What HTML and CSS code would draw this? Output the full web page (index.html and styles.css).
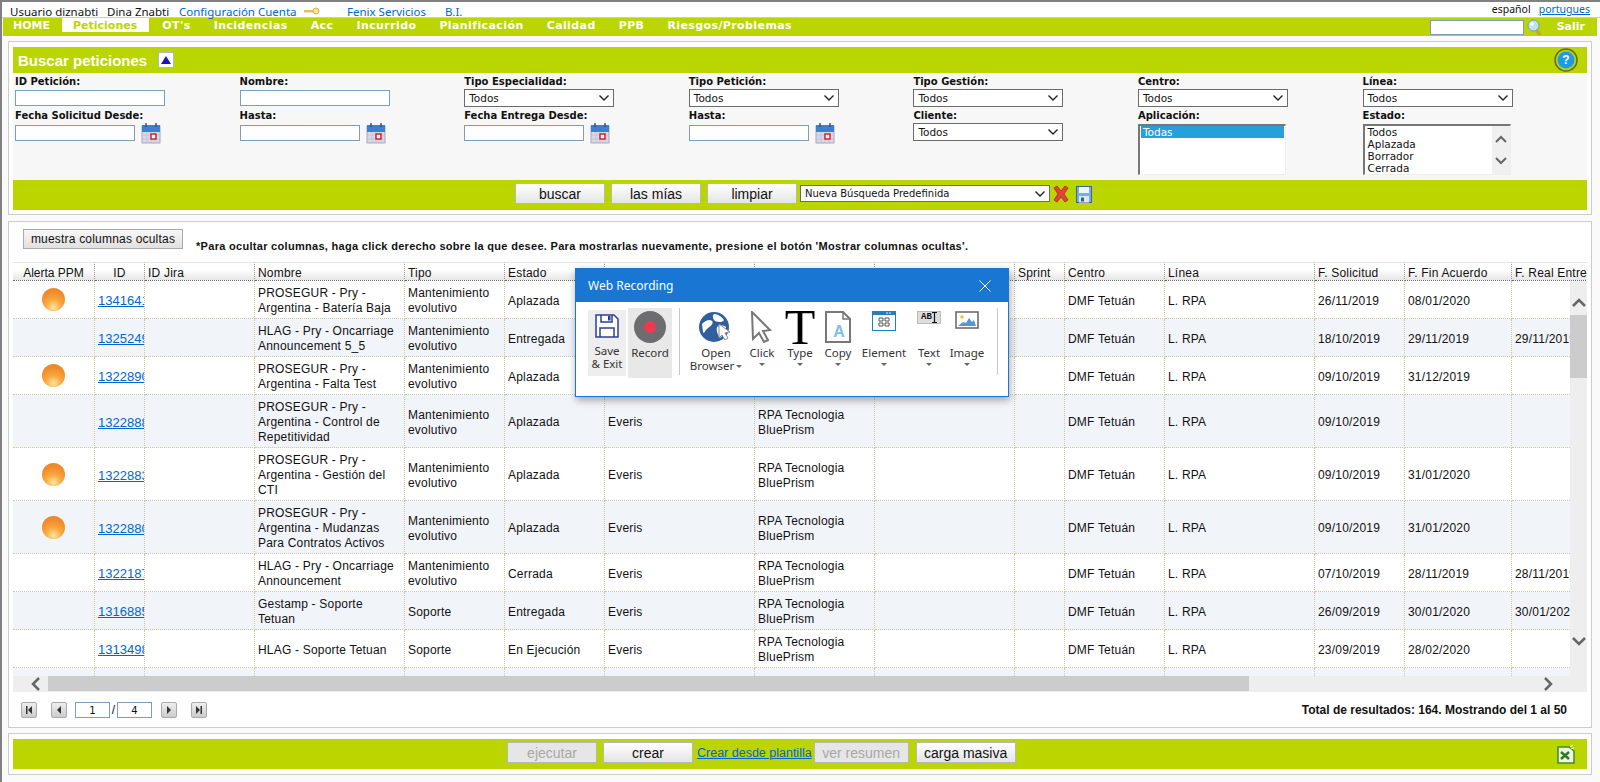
FILE: index.html
```html
<!DOCTYPE html>
<html>
<head>
    <title>Buscar peticiones</title>
    <link rel="stylesheet" href="styles.css">
</head>
<body>
<div class="page">
    <div class="topbar">
        <span class="user">Usuario diznabti</span>
        <span class="user-name">Dina Znabti</span>
        <a class="top-link cuenta">Configuración Cuenta</a>
        <svg class="key" width="16" height="8" viewBox="0 0 16 8"><rect x="0" y="3" width="10" height="2.4" fill="#e6bc60"/><circle cx="12" cy="4" r="3" fill="#f8e2a0" stroke="#dcae50"/></svg>
        <a class="top-link fenix">Fenix Servicios</a>
        <a class="top-link bi">B.I.</a>
        <span class="langs"><span>español</span><a class="lang-link">portugues</a></span>
    </div>

    <div class="menu">
        <a class="menu-item">HOME</a>
        <a class="menu-item active">Peticiones</a>
        <a class="menu-item">OT's</a>
        <a class="menu-item">Incidencias</a>
        <a class="menu-item">Acc</a>
        <a class="menu-item">Incurrido</a>
        <a class="menu-item">Planificación</a>
        <a class="menu-item">Calidad</a>
        <a class="menu-item">PPB</a>
        <a class="menu-item">Riesgos/Problemas</a>
        <div class="menu-right">
            <input class="menu-search" type="text">
            <svg width="16" height="17" viewBox="0 0 16 17"><path d="M9 10l4 6" stroke="#c9a23a" stroke-width="3"/><circle cx="6.500" cy="6.500" r="5.500" fill="#bfe3ee" stroke="#6f9fb0"/><circle cx="5" cy="5" r="2" fill="#eefafd"/></svg>
            <a class="menu-item salir">Salir</a>
        </div>
    </div>

    <div class="panel search-panel">
        <div class="green-head">
            <span class="head-title">Buscar peticiones</span>
            <span class="toggle"><svg width="10" height="8" viewBox="0 0 10 8"><path d="M5 0l5 8H0z" fill="#1a1aa8"/></svg></span>
            <svg class="help" width="24" height="24" viewBox="0 0 24 24"><circle cx="12" cy="12" r="11" fill="#bcd500" stroke="#5f6b3a" stroke-width="1.500"/><circle cx="12" cy="12" r="8.500" fill="#1e9be8"/><text x="12" y="16" text-anchor="middle" class="help-mark">?</text></svg>
        </div>

        <div class="filters">
            <div class="field"><label>ID Petición:</label><input class="txt" type="text"></div>
            <div class="field"><label>Nombre:</label><input class="txt" type="text"></div>
            <div class="field"><label>Tipo Especialidad:</label><div class="sel">Todos<svg class="chev" width="10" height="6" viewBox="0 0 10 6"><path d="M.5.5L5 5 9.500.5" fill="none" stroke="#222" stroke-width="1.400"/></svg></div></div>
            <div class="field"><label>Tipo Petición:</label><div class="sel">Todos<svg class="chev" width="10" height="6" viewBox="0 0 10 6"><path d="M.5.5L5 5 9.500.5" fill="none" stroke="#222" stroke-width="1.400"/></svg></div></div>
            <div class="field"><label>Tipo Gestión:</label><div class="sel">Todos<svg class="chev" width="10" height="6" viewBox="0 0 10 6"><path d="M.5.5L5 5 9.500.5" fill="none" stroke="#222" stroke-width="1.400"/></svg></div></div>
            <div class="field"><label>Centro:</label><div class="sel">Todos<svg class="chev" width="10" height="6" viewBox="0 0 10 6"><path d="M.5.5L5 5 9.500.5" fill="none" stroke="#222" stroke-width="1.400"/></svg></div></div>
            <div class="field"><label>Línea:</label><div class="sel">Todos<svg class="chev" width="10" height="6" viewBox="0 0 10 6"><path d="M.5.5L5 5 9.500.5" fill="none" stroke="#222" stroke-width="1.400"/></svg></div></div>

            <div class="field"><label>Fecha Solicitud Desde:</label>
                <div class="date"><input class="txt short" type="text"><svg class="cal" width="20" height="21" viewBox="0 0 20 21"><rect x="1" y="3" width="18" height="17" fill="#d8d8ea" stroke="#a8a8c0"/><rect x="1" y="2" width="18" height="7" fill="#3f7fd0"/><path d="M5 0v4M15 0v4" stroke="#2a5a9a" stroke-width="1.500"/><path d="M1 12h18M1 16h18M6 9v11M10 9v11M14 9v11" stroke="#bdbdd2" stroke-width=".6"/><rect x="10" y="11" width="5" height="5" fill="#fff" stroke="#d01818" stroke-width="1.400"/></svg></div>
            </div>
            <div class="field"><label>Hasta:</label>
                <div class="date"><input class="txt short" type="text"><svg class="cal" width="20" height="21" viewBox="0 0 20 21"><rect x="1" y="3" width="18" height="17" fill="#d8d8ea" stroke="#a8a8c0"/><rect x="1" y="2" width="18" height="7" fill="#3f7fd0"/><path d="M5 0v4M15 0v4" stroke="#2a5a9a" stroke-width="1.500"/><path d="M1 12h18M1 16h18M6 9v11M10 9v11M14 9v11" stroke="#bdbdd2" stroke-width=".6"/><rect x="10" y="11" width="5" height="5" fill="#fff" stroke="#d01818" stroke-width="1.400"/></svg></div>
            </div>
            <div class="field"><label>Fecha Entrega Desde:</label>
                <div class="date"><input class="txt short" type="text"><svg class="cal" width="20" height="21" viewBox="0 0 20 21"><rect x="1" y="3" width="18" height="17" fill="#d8d8ea" stroke="#a8a8c0"/><rect x="1" y="2" width="18" height="7" fill="#3f7fd0"/><path d="M5 0v4M15 0v4" stroke="#2a5a9a" stroke-width="1.500"/><path d="M1 12h18M1 16h18M6 9v11M10 9v11M14 9v11" stroke="#bdbdd2" stroke-width=".6"/><rect x="10" y="11" width="5" height="5" fill="#fff" stroke="#d01818" stroke-width="1.400"/></svg></div>
            </div>
            <div class="field"><label>Hasta:</label>
                <div class="date"><input class="txt short" type="text"><svg class="cal" width="20" height="21" viewBox="0 0 20 21"><rect x="1" y="3" width="18" height="17" fill="#d8d8ea" stroke="#a8a8c0"/><rect x="1" y="2" width="18" height="7" fill="#3f7fd0"/><path d="M5 0v4M15 0v4" stroke="#2a5a9a" stroke-width="1.500"/><path d="M1 12h18M1 16h18M6 9v11M10 9v11M14 9v11" stroke="#bdbdd2" stroke-width=".6"/><rect x="10" y="11" width="5" height="5" fill="#fff" stroke="#d01818" stroke-width="1.400"/></svg></div>
            </div>
            <div class="field"><label>Cliente:</label><div class="sel">Todos<svg class="chev" width="10" height="6" viewBox="0 0 10 6"><path d="M.5.5L5 5 9.500.5" fill="none" stroke="#222" stroke-width="1.400"/></svg></div></div>
            <div class="field"><label>Aplicación:</label>
                <div class="listbox"><div class="opt selected">Todas</div></div>
            </div>
            <div class="field"><label>Estado:</label>
                <div class="listbox">
                    <div class="opt">Todos</div>
                    <div class="opt">Aplazada</div>
                    <div class="opt">Borrador</div>
                    <div class="opt">Cerrada</div>
                    <div class="list-scroll">
                        <svg width="12" height="8" viewBox="0 0 12 8"><path d="M1 7l5-5 5 5" fill="none" stroke="#666" stroke-width="2"/></svg>
                        <svg width="12" height="8" viewBox="0 0 12 8"><path d="M1 1l5 5 5-5" fill="none" stroke="#666" stroke-width="2"/></svg>
                    </div>
                </div>
            </div>
        </div>

        <div class="green-bar actions">
            <button class="btn">buscar</button>
            <button class="btn">las mías</button>
            <button class="btn">limpiar</button>
            <div class="sel wide">Nueva Búsqueda Predefinida<svg class="chev" width="10" height="6" viewBox="0 0 10 6"><path d="M.5.5L5 5 9.500.5" fill="none" stroke="#222" stroke-width="1.400"/></svg></div>
            <svg class="bar-icon" width="18" height="18" viewBox="0 0 18 18"><path d="M2 3l3-2 4 5 4-5 3 2-4 6 4 6-3 2-4-5-4 5-3-2 4-6z" fill="#e8403a" stroke="#a82420" stroke-width=".8"/></svg>
            <svg class="bar-icon" width="16" height="17" viewBox="0 0 16 17"><rect x=".5" y=".5" width="15" height="16" fill="#7ab0d8" stroke="#2d6a9a"/><rect x="3" y="1" width="10" height="6" fill="#f2f6fa"/><rect x="3" y="10" width="10" height="6.500" fill="#dfe6ea"/><rect x="5" y="11.500" width="3" height="4" fill="#40607a"/></svg>
        </div>
    </div>

    <div class="panel grid-panel">
        <div class="grid-note">
            <button class="btn-gray">muestra columnas ocultas</button>
            <span class="note">*Para ocultar columnas, haga click derecho sobre la que desee. Para mostrarlas nuevamente, presione el botón 'Mostrar columnas ocultas'.</span>
        </div>

        <div class="grid">
            <div class="grid-head">
                <table>
                    <colgroup><col class="c1"><col class="c2"><col class="c3"><col class="c4"><col class="c5"><col class="c6"><col class="c7"><col class="c8"><col class="c9"><col class="c10"><col class="c11"><col class="c12"><col class="c13"><col class="c14"><col class="c15"></colgroup>
                    <tr>
                        <th class="center alerta">Alerta PPM</th><th class="center">ID</th><th>ID Jira</th><th>Nombre</th><th>Tipo</th><th>Estado</th><th></th><th></th><th></th><th>Sprint</th><th>Centro</th><th>Línea</th><th>F. Solicitud</th><th>F. Fin Acuerdo</th><th>F. Real Entrega</th>
                    </tr>
                </table>
            </div>
            <div class="grid-mid">
                <div class="grid-body">
                    <table>
                        <colgroup><col class="c1"><col class="c2"><col class="c3"><col class="c4"><col class="c5"><col class="c6"><col class="c7"><col class="c8"><col class="c9"><col class="c10"><col class="c11"><col class="c12"><col class="c13"><col class="c14"><col class="c15"></colgroup>
                        <tr class="r38"><td class="center orb-cell"><span class="orb"></span></td><td><a class="id-link">1341641</a></td><td></td><td>PROSEGUR - Pry - Argentina - Batería Baja</td><td>Mantenimiento evolutivo</td><td>Aplazada</td><td></td><td></td><td></td><td></td><td>DMF Tetuán</td><td>L. RPA</td><td>26/11/2019</td><td>08/01/2020</td><td></td></tr>
                        <tr class="r38 alt"><td></td><td><a class="id-link">1325249</a></td><td></td><td>HLAG - Pry - Oncarriage Announcement 5_5</td><td>Mantenimiento evolutivo</td><td>Entregada</td><td></td><td></td><td></td><td></td><td>DMF Tetuán</td><td>L. RPA</td><td>18/10/2019</td><td>29/11/2019</td><td>29/11/2019</td></tr>
                        <tr class="r38"><td class="center orb-cell"><span class="orb"></span></td><td><a class="id-link">1322890</a></td><td></td><td>PROSEGUR - Pry - Argentina - Falta Test</td><td>Mantenimiento evolutivo</td><td>Aplazada</td><td></td><td></td><td></td><td></td><td>DMF Tetuán</td><td>L. RPA</td><td>09/10/2019</td><td>31/12/2019</td><td></td></tr>
                        <tr class="r53 alt"><td></td><td><a class="id-link">1322888</a></td><td></td><td>PROSEGUR - Pry - Argentina - Control de Repetitividad</td><td>Mantenimiento evolutivo</td><td>Aplazada</td><td>Everis</td><td>RPA Tecnologia BluePrism</td><td></td><td></td><td>DMF Tetuán</td><td>L. RPA</td><td>09/10/2019</td><td></td><td></td></tr>
                        <tr class="r53"><td class="center orb-cell"><span class="orb"></span></td><td><a class="id-link">1322883</a></td><td></td><td>PROSEGUR - Pry - Argentina - Gestión del CTI</td><td>Mantenimiento evolutivo</td><td>Aplazada</td><td>Everis</td><td>RPA Tecnologia BluePrism</td><td></td><td></td><td>DMF Tetuán</td><td>L. RPA</td><td>09/10/2019</td><td>31/01/2020</td><td></td></tr>
                        <tr class="r53 alt"><td class="center orb-cell"><span class="orb"></span></td><td><a class="id-link">1322880</a></td><td></td><td>PROSEGUR - Pry - Argentina - Mudanzas Para Contratos Activos</td><td>Mantenimiento evolutivo</td><td>Aplazada</td><td>Everis</td><td>RPA Tecnologia BluePrism</td><td></td><td></td><td>DMF Tetuán</td><td>L. RPA</td><td>09/10/2019</td><td>31/01/2020</td><td></td></tr>
                        <tr class="r38"><td></td><td><a class="id-link">1322187</a></td><td></td><td>HLAG - Pry - Oncarriage Announcement</td><td>Mantenimiento evolutivo</td><td>Cerrada</td><td>Everis</td><td>RPA Tecnologia BluePrism</td><td></td><td></td><td>DMF Tetuán</td><td>L. RPA</td><td>07/10/2019</td><td>28/11/2019</td><td>28/11/2019</td></tr>
                        <tr class="r38 alt"><td></td><td><a class="id-link">1316885</a></td><td></td><td>Gestamp - Soporte Tetuan</td><td>Soporte</td><td>Entregada</td><td>Everis</td><td>RPA Tecnologia BluePrism</td><td></td><td></td><td>DMF Tetuán</td><td>L. RPA</td><td>26/09/2019</td><td>30/01/2020</td><td>30/01/2020</td></tr>
                        <tr class="r38"><td></td><td><a class="id-link">1313498</a></td><td></td><td>HLAG - Soporte Tetuan</td><td>Soporte</td><td>En Ejecución</td><td>Everis</td><td>RPA Tecnologia BluePrism</td><td></td><td></td><td>DMF Tetuán</td><td>L. RPA</td><td>23/09/2019</td><td>28/02/2020</td><td></td></tr>
                        <tr class="r38 alt"><td></td><td></td><td></td><td></td><td></td><td></td><td></td><td></td><td></td><td></td><td></td><td></td><td></td><td></td><td></td></tr>
                    </table>
                </div>
                <div class="vscroll">
                    <svg class="arrow-up" width="14" height="9" viewBox="0 0 14 9"><path d="M1 8l6-6 6 6" fill="none" stroke="#666" stroke-width="2.500"/></svg>
                    <div class="vthumb"></div>
                    <svg class="arrow-down" width="14" height="9" viewBox="0 0 14 9"><path d="M1 1l6 6 6-6" fill="none" stroke="#666" stroke-width="2.500"/></svg>
                </div>
            </div>
            <div class="hscroll">
                <svg class="arrow-left" width="9" height="14" viewBox="0 0 9 14"><path d="M8 1L2 7l6 6" fill="none" stroke="#666" stroke-width="2.500"/></svg>
                <div class="hthumb"></div>
                <svg class="arrow-right" width="9" height="14" viewBox="0 0 9 14"><path d="M1 1l6 6-6 6" fill="none" stroke="#666" stroke-width="2.500"/></svg>
            </div>
        </div>

        <div class="pager">
            <span class="pg first"><svg width="8" height="8" viewBox="0 0 8 8"><path d="M1 0h1.500v8H1zM7 0v8L3 4z" fill="#333"/></svg></span>
            <span class="pg prev"><svg width="6" height="8" viewBox="0 0 6 8"><path d="M5 0v8L1 4z" fill="#333"/></svg></span>
            <input class="pg-input" type="text" value="1">
            <span class="pg-slash">/</span>
            <input class="pg-input" type="text" value="4">
            <span class="pg next"><svg width="6" height="8" viewBox="0 0 6 8"><path d="M1 0v8l4-4z" fill="#333"/></svg></span>
            <span class="pg last"><svg width="8" height="8" viewBox="0 0 8 8"><path d="M7 0H5.500v8H7zM1 0v8l4-4z" fill="#333"/></svg></span>
            <span class="total">Total de resultados: 164. Mostrando del 1 al 50</span>
        </div>
    </div>

    <div class="panel foot-panel">
        <div class="green-bar foot">
            <button class="btn" disabled>ejecutar</button>
            <button class="btn">crear</button>
            <a class="tpl-link">Crear desde plantilla</a>
            <button class="btn" disabled>ver resumen</button>
            <button class="btn">carga masiva</button>
            <svg class="excel" width="18" height="20" viewBox="0 0 18 20"><path d="M1 3h11l5 4v12H1z" fill="#eef6e2" stroke="#3f8a2c" stroke-width="1.500"/><path d="M4 8l8 7M12 8l-8 7" stroke="#2f7a24" stroke-width="2.500"/><path d="M13 3l3-2M14 5l3-1" stroke="#fff" stroke-width="1"/></svg>
        </div>
    </div>
</div>

<!-- ventana flotante de grabacion -->
<div class="recorder">
    <div class="rec-title">
        <span>Web Recording</span>
        <svg width="12" height="12" viewBox="0 0 12 12"><path d="M.5.5l11 11M11.500.5l-11 11" stroke="#fff" stroke-width="1"/></svg>
    </div>
    <div class="rec-body">
        <div class="rec-save">
            <svg width="24" height="24" viewBox="0 0 24 24"><path d="M1 1h18l4 4v18H1z" fill="#fff" stroke="#2b3f96" stroke-width="1.500"/><path d="M6 1v7h11V1" fill="none" stroke="#2b3f96" stroke-width="1.500"/><rect x="13" y="2" width="2.500" height="4.500" fill="#2b3f96"/><path d="M5 23v-9h14v9" fill="none" stroke="#2b3f96" stroke-width="1.500"/></svg>
            <span>Save<br>&amp; Exit</span>
        </div>
        <div class="rec-record">
            <svg width="32" height="32" viewBox="0 0 32 32"><circle cx="16" cy="16" r="16" fill="#6d6d70"/><circle cx="16" cy="16" r="6" fill="#ee3a50"/></svg>
            <span>Record</span>
        </div>
        <div class="rec-sep"></div>
        <div class="rec-tools">
            <div class="tool">
                <div class="tool-icon"><svg width="34" height="32" viewBox="0 0 34 32"><circle cx="15" cy="16" r="15" fill="#2f5f9f"/><path d="M3 13c4-4 8-5 10-3s-1 5-4 7-4 7-5 4M15 3c4 0 8 3 10 6-2 3-6 2-9 1-2-2-3-5-1-7zM18 16c3-2 7-2 9 0 0 4-3 9-6 11-2-3-4-7-3-11z" fill="#fff"/><path d="M20 13l11 8-5 1 3 5-3 2-3-5-3 3z" fill="#fff" stroke="#8a8a8a"/></svg></div>
                <span>Open<br>Browser<i class="caret inline"></i></span>
            </div>
            <div class="tool">
                <div class="tool-icon"><svg width="24" height="32" viewBox="0 0 24 32"><path d="M2 1l18 18-7 1 5 9-4 2-5-9-6 6z" fill="#fff" stroke="#77777a" stroke-width="2"/></svg></div>
                <span>Click</span><i class="caret"></i>
            </div>
            <div class="tool">
                <div class="tool-icon"><span class="big-t">T</span></div>
                <span>Type</span><i class="caret"></i>
            </div>
            <div class="tool">
                <div class="tool-icon"><svg width="26" height="32" viewBox="0 0 26 32"><path d="M1 1h17l7 7v23H1z" fill="#fff" stroke="#77777a" stroke-width="2"/><path d="M18 1v7h7" fill="none" stroke="#77777a" stroke-width="1.500"/><text x="14" y="26" text-anchor="middle" class="doc-a">A</text></svg></div>
                <span>Copy</span><i class="caret"></i>
            </div>
            <div class="tool">
                <div class="tool-icon"><svg width="24" height="20" viewBox="0 0 24 20"><rect width="24" height="20" fill="#1f7fbf"/><rect x="1" y="4" width="22" height="15" fill="#fff"/><circle cx="15" cy="2" r=".8" fill="#fff"/><circle cx="18" cy="2" r=".8" fill="#fff"/><circle cx="21" cy="2" r=".8" fill="#f04040"/><path d="M7 7h4v3H7zM13 7h4v3h-4zM7 12h4v3H7zM13 12h4v3h-4z" fill="none" stroke="#555" stroke-width="1"/></svg></div>
                <span>Element</span><i class="caret"></i>
            </div>
            <div class="tool">
                <div class="tool-icon"><div class="ab-box"><span>AB</span><svg width="5" height="11" viewBox="0 0 5 11"><path d="M0 .5h5M0 10.500h5M2.500 .5v10" stroke="#111" stroke-width="1.200"/></svg></div></div>
                <span>Text</span><i class="caret"></i>
            </div>
            <div class="tool">
                <div class="tool-icon"><svg width="24" height="18" viewBox="0 0 24 18"><rect x="1" y="1" width="22" height="16" fill="#fff" stroke="#6d6d70" stroke-width="1.600"/><circle cx="7" cy="6" r="1.800" fill="#f0c040"/><path d="M3 15l5-4 3 1 3-5 3 4 2-2 2 6z" fill="#5a94d8"/></svg></div>
                <span>Image</span><i class="caret"></i>
            </div>
        </div>
        <div class="rec-sep"></div>
    </div>
</div>
</body>
</html>
```

FILE: styles.css
```css
html, body {
    margin: 0;
    padding: 0;
    background-color: #fff;
}
body {
    width: 1600px;
    height: 782px;
    overflow: hidden;
    position: relative;
    font-family: "Liberation Sans", Arial, sans-serif;
    font-size: 12px;
    color: #111;
}
a {
    cursor: pointer;
}
.page {
    height: 780px;
    border-top: 2px solid #808080;
    border-left: 2px solid #808080;
    background-color: #fafafa;
}

/* barra superior */
.topbar {
    height: 15px;
    box-sizing: content-box;
    display: flex;
    align-items: center;
    background-color: #fff;
    border-bottom: 1px solid #ccc;
    font-family: "Noto Sans", sans-serif;
    font-size: 11.5px;
    line-height: 15px;
    white-space: nowrap;
}
.topbar > * {
    margin-top: 3px;
}
.user {
    margin-left: 8px;
    width: 97px;
}
.user-name {
    width: 72px;
}
.top-link {
    color: #0066cc;
}
.cuenta {
    width: 125px;
}
.key {
    margin-right: 27px;
}
.fenix {
    width: 98px;
}
.topbar .langs {
    margin: 0 10px 0 auto;
    font-size: 10.5px;
    display: flex;
    gap: 8px;
}
.lang-link {
    color: #0066cc;
    text-decoration: underline;
}

/* menu */
.menu {
    height: 18px;
    margin: 0 3px 5px 1px;
    display: flex;
    align-items: flex-start;
    background-color: #bbd500;
}
.menu-item {
    padding: 0 11.5px;
    height: 14px;
    line-height: 15px;
    font-family: "DejaVu Sans", sans-serif;
    font-size: 11px;
    font-weight: bold;
    letter-spacing: 0.4px;
    color: #fff;
    white-space: nowrap;
}
.menu-item:first-child {
    padding-left: 10px;
    letter-spacing: 0;
}
.menu-item.active {
    background-color: #fff;
    color: #bbd500;
    letter-spacing: 0;
}
.menu-item.active + .menu-item {
    margin-left: 2px;
}
.menu-right {
    margin-left: auto;
    margin-right: 1px;
    display: flex;
    align-items: center;
    height: 18px;
    gap: 3px;
}
.menu-search {
    width: 94px;
    height: 15px;
    box-sizing: border-box;
    border: 1px solid #7f9db9;
    background-color: #fff;
    padding: 0;
    margin: 0;
}
.salir {
    height: 18px;
    line-height: 18px;
    padding: 0 11px;
    letter-spacing: 0;
}

/* paneles */
.panel {
    width: 1584px;
    margin-left: 6px;
    box-sizing: border-box;
    border: 1px solid #ccc;
    background-color: #fff;
    padding: 5px 4px;
}
.search-panel {
    height: 174px;
    margin-bottom: 6px;
}
.green-head {
    height: 26px;
    display: flex;
    align-items: center;
    padding-left: 5px;
    background-color: #bbd500;
}
.head-title {
    color: #fff;
    font-size: 15px;
    font-weight: bold;
}
.toggle {
    margin-left: 11px;
    width: 16px;
    height: 16px;
    box-sizing: border-box;
    display: flex;
    align-items: center;
    justify-content: center;
    background-color: #fff;
    border: 1px solid #b0b8e0;
    border-radius: 2px;
}
.help {
    margin-left: auto;
    margin-right: 9px;
}
.help-mark {
    font-family: "Liberation Sans", sans-serif;
    font-size: 12px;
    font-weight: bold;
    fill: #fff;
}
.filters {
    height: 104px;
    padding: 3px 0 0 2px;
    display: grid;
    grid-template-columns: repeat(7, 224.6px);
    grid-template-rows: 34px 1fr;
    background-color: #f7f7f7;
}
.field {
    display: flex;
    flex-direction: column;
    align-items: flex-start;
}
.field label {
    height: 13px;
    line-height: 12px;
    font-family: "DejaVu Sans", sans-serif;
    font-size: 10px;
    font-weight: bold;
    white-space: nowrap;
}
.txt {
    width: 150px;
    height: 16px;
    margin: 1px 0 0;
    padding: 0;
    box-sizing: border-box;
    border: 1px solid #7f9db9;
    background-color: #fff;
}
.txt.short {
    width: 120px;
    margin-top: 2px;
}
.date {
    display: flex;
    align-items: flex-start;
}
.cal {
    margin-left: 6px;
}
.sel {
    width: 150px;
    height: 18px;
    box-sizing: border-box;
    display: flex;
    align-items: center;
    justify-content: space-between;
    padding: 0 4px;
    border: 1px solid #6b6b6b;
    background-color: #fff;
    font-family: "DejaVu Sans", sans-serif;
    font-size: 10.5px;
    white-space: nowrap;
}
.listbox {
    width: 148px;
    height: 51px;
    box-sizing: border-box;
    margin-top: 1px;
    padding: 0 1px;
    position: relative;
    overflow: hidden;
    border-top: 2px solid #777;
    border-left: 2px solid #777;
    border-right: 1px solid #eee;
    border-bottom: 1px solid #eee;
    background-color: #fff;
    font-family: "DejaVu Sans", sans-serif;
    font-size: 10.5px;
}
.opt {
    height: 12px;
    line-height: 12px;
    padding-left: 2px;
}
.opt.selected {
    background-color: #26a0da;
    color: #fff;
}
.list-scroll {
    position: absolute;
    top: 0;
    right: 0;
    bottom: 0;
    width: 18px;
    display: flex;
    flex-direction: column;
    align-items: center;
    justify-content: center;
    gap: 14px;
    background-color: #f0f0f0;
}
.green-bar {
    display: flex;
    align-items: center;
    background-color: #bbd500;
}
.actions {
    height: 30px;
    padding-left: 502px;
    gap: 6px;
}
.btn {
    width: 90px;
    height: 21px;
    margin-bottom: 3px;
    padding: 0;
    box-sizing: border-box;
    border: 1px solid #b8b8b8;
    background: linear-gradient(#fff, #e4e4e4);
    font-family: "Liberation Sans", sans-serif;
    font-size: 14px;
    color: #111;
}
.btn:disabled {
    color: #a8a8a8;
    background: #e6e6e6;
}
.sel.wide {
    width: 250px;
    height: 17px;
    margin: -3px -4px 0 -3px;
    font-size: 10px;
}
.bar-icon {
    margin-top: -2px;
}

/* listado */
.grid-panel {
    height: 507px;
    margin-bottom: 5px;
    padding-top: 7px;
}
.grid-note {
    height: 33px;
    display: flex;
    align-items: flex-start;
}
.btn-gray {
    margin-left: 10px;
    width: 160px;
    height: 20px;
    padding: 0;
    box-sizing: border-box;
    border: 1px solid #aaa;
    background: linear-gradient(#f8f8f8, #e0e0e0);
    font-family: "Liberation Sans", sans-serif;
    font-size: 12px;
    letter-spacing: 0.2px;
    color: #111;
}
.note {
    margin: 11px 0 0 13px;
    font-size: 11px;
    font-weight: bold;
    letter-spacing: 0.3px;
    white-space: nowrap;
}
.grid {
    width: 1574px;
    letter-spacing: 0.2px;
}
.grid table {
    table-layout: fixed;
    border-collapse: separate;
    border-spacing: 0;
    width: 1601px;
}
.c1 { width: 82px; }
.c2 { width: 50px; }
.c3 { width: 110px; }
.c4 { width: 150px; }
.c5 { width: 100px; }
.c6 { width: 100px; }
.c7 { width: 150px; }
.c8 { width: 120px; }
.c9 { width: 140px; }
.c10 { width: 50px; }
.c11 { width: 100px; }
.c12 { width: 150px; }
.c13 { width: 90px; }
.c14 { width: 107px; }
.c15 { width: 102px; }
.grid-head {
    overflow: hidden;
}
.grid-head th {
    height: 19px;
    padding: 3px 3px 0;
    box-sizing: border-box;
    overflow: hidden;
    white-space: nowrap;
    text-align: left;
    font-weight: normal;
    background: linear-gradient(#fff 40%, #e6e6e6);
    border-top: 1px solid #e4e4e4;
    border-right: 1px dotted #999;
    border-bottom: 1px dotted #666;
}
.grid-head .alerta {
    letter-spacing: 0;
}
.center {
    text-align: center !important;
}
.grid-mid {
    height: 395px;
    display: flex;
}
.grid-body {
    width: 1557px;
    height: 395px;
    overflow: hidden;
}
.grid-body td {
    padding: 3px 3px 0;
    box-sizing: border-box;
    overflow: hidden;
    line-height: 15px;
    background-color: #fff;
    border-right: 1px dotted #cfc7a8;
    border-bottom: 1px dotted #cfc7a8;
}
.grid-body .orb-cell {
    padding-top: 0;
}
.grid-body .alt td {
    background-color: #f1f4f9;
}
.r38 td {
    height: 38px;
}
.r53 td {
    height: 53px;
}
.id-link {
    font-size: 13px;
    letter-spacing: 0;
    color: #0066cc;
    text-decoration: underline;
    white-space: nowrap;
}
.orb {
    display: block;
    width: 23px;
    height: 23px;
    margin: 0 auto;
    border-radius: 50%;
    background: radial-gradient(circle at 50% 85%, #ffe6a0 0, #f9a83f 35%, #f08a2c 70%, #e8862e 100%);
}
.vscroll {
    width: 17px;
    position: relative;
    background-color: #eee;
}
.arrow-up {
    position: absolute;
    top: 17px;
    left: 2px;
}
.vthumb {
    position: absolute;
    top: 34px;
    left: 0;
    width: 17px;
    height: 63px;
    background-color: #ccc;
}
.arrow-down {
    position: absolute;
    top: 356px;
    left: 2px;
}
.hscroll {
    height: 16px;
    position: relative;
    background-color: #eee;
}
.arrow-left {
    position: absolute;
    left: 18px;
    top: 1px;
}
.hthumb {
    position: absolute;
    left: 35px;
    top: 0;
    width: 1201px;
    height: 15px;
    background-color: #ccc;
}
.arrow-right {
    position: absolute;
    left: 1531px;
    top: 1px;
}
.pager {
    height: 16px;
    margin-top: 10px;
    display: flex;
    align-items: center;
    padding-left: 8px;
}
.pg {
    width: 16px;
    height: 16px;
    box-sizing: border-box;
    display: flex;
    align-items: center;
    justify-content: center;
    border: 1px solid #aaa;
    border-radius: 2px;
    background: linear-gradient(#eee, #ccc);
}
.first {
    margin-right: 14px;
}
.prev {
    margin-right: 8px;
}
.next {
    margin: 0 14px 0 9px;
}
.pg-input {
    width: 35px;
    height: 16px;
    padding: 0;
    box-sizing: border-box;
    border: 1px solid #7f9db9;
    text-align: center;
    font-family: "DejaVu Sans", sans-serif;
    font-size: 10px;
    color: #111;
}
.pg-slash {
    width: 7px;
    text-align: center;
}
.total {
    margin-left: auto;
    margin-right: 20px;
    font-weight: bold;
    font-size: 12px;
}

/* pie */
.foot-panel {
    height: 42px;
}
.foot {
    height: 30px;
    padding-left: 494px;
    gap: 6px;
}
.foot .btn:nth-of-type(3) {
    width: 95px;
    margin-left: -2px;
}
.foot .btn:nth-of-type(4) {
    width: 100px;
    margin-left: 1px;
}
.tpl-link {
    margin: 0 -2px 3px -2px;
    color: #0066cc;
    font-size: 12.5px;
    text-decoration: underline;
    white-space: nowrap;
}
.excel {
    margin-left: auto;
    margin-right: 12px;
}

/* ventana flotante */
.recorder {
    position: absolute;
    left: 575px;
    top: 268px;
    width: 434px;
    height: 129px;
    box-sizing: border-box;
    border: 1px solid #1976d2;
    background-color: #fff;
    box-shadow: 1px 3px 8px rgba(0, 0, 0, 0.35);
    font-family: "Noto Sans", sans-serif;
    font-size: 11.5px;
    color: #333;
}
.rec-title {
    height: 33px;
    padding: 0 17px 0 12px;
    display: flex;
    align-items: center;
    justify-content: space-between;
    background-color: #1976d2;
    color: #fff;
    font-size: 12px;
}
.rec-body {
    display: flex;
    align-items: flex-start;
    padding: 6px 0 0 12px;
    text-align: center;
    line-height: 13px;
}
.rec-save {
    width: 38px;
    height: 66px;
    margin-top: 2px;
    display: flex;
    flex-direction: column;
    align-items: center;
    padding-top: 4px;
    box-sizing: border-box;
    gap: 6px;
    background-color: #eee;
}
.rec-record {
    width: 44px;
    height: 70px;
    margin-left: 2px;
    display: flex;
    flex-direction: column;
    align-items: center;
    padding-top: 3px;
    box-sizing: border-box;
    gap: 3px;
    background-color: #e8e8e8;
}
.rec-sep {
    width: 1px;
    height: 67px;
    margin: 0 7px;
    background-color: #c8c8c8;
}
.rec-tools {
    display: grid;
    grid-template-columns: 64px 28px 48px 28px 64px 26px 50px;
    margin: 0 -2px 0 -3px;
}
.tool {
    display: flex;
    flex-direction: column;
    align-items: center;
    white-space: nowrap;
}
.tool-icon {
    height: 35px;
    display: flex;
    align-items: flex-start;
    justify-content: center;
    padding-top: 3px;
}
.big-t {
    font-family: "Liberation Serif", serif;
    font-size: 50px;
    line-height: 32px;
    color: #000;
}
.doc-a {
    font-family: "Liberation Sans", sans-serif;
    font-size: 16px;
    font-weight: bold;
    fill: #7cc0ea;
}
.ab-box {
    width: 24px;
    height: 13px;
    display: flex;
    align-items: center;
    justify-content: center;
    background-color: #ddd;
    border: 1px solid #bbb;
    box-sizing: border-box;
    font-family: "Liberation Mono", monospace;
    font-size: 9px;
    font-weight: bold;
    color: #111;
}
.caret {
    display: block;
    width: 0;
    height: 0;
    margin-top: 4px;
    border-left: 3px solid transparent;
    border-right: 3px solid transparent;
    border-top: 3px solid #666;
}
.caret.inline {
    display: inline-block;
    margin: 0 0 2px 2px;
}
```
